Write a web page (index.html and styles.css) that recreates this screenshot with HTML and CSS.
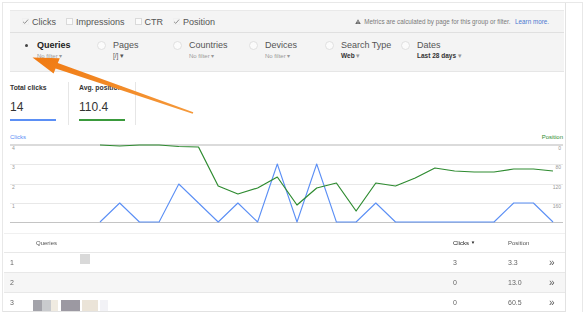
FILE: index.html
```html
<!DOCTYPE html>
<html>
<head>
<meta charset="utf-8">
<link rel="stylesheet" href="styles.css">
</head>
<body>
<div class="frame">
  <div class="main">
    <div class="toolbar">
      <div class="checks">
        <label class="chk"><span class="box on"><svg viewBox="0 0 7 7"><path d="M1 3.8 L2.8 5.4 L6 1.6" fill="none" stroke="#888" stroke-width="0.9"/></svg></span>Clicks</label>
        <label class="chk"><span class="box"></span>Impressions</label>
        <label class="chk"><span class="box"></span>CTR</label>
        <label class="chk"><span class="box on"><svg viewBox="0 0 7 7"><path d="M1 3.8 L2.8 5.4 L6 1.6" fill="none" stroke="#888" stroke-width="0.9"/></svg></span>Position</label>
        <div class="note"><svg class="warn" viewBox="0 0 8 7"><path d="M4 0.3 L7.8 6.7 L0.2 6.7 Z" fill="#666"/><rect x="3.6" y="2.3" width="0.8" height="2.4" fill="#fff"/><rect x="3.6" y="5.2" width="0.8" height="0.8" fill="#fff"/></svg>Metrics are calculated by page for this group or filter. <span class="link">Learn more.</span></div>
      </div>
      <div class="dims">
        <div class="dim"><span class="radio sel"></span><div><div class="dim-label strong">Queries</div><div class="dim-sub">No filter ▾</div></div></div>
        <div class="dim"><span class="radio"></span><div><div class="dim-label">Pages</div><div class="dim-sub dark">[/] ▾</div></div></div>
        <div class="dim"><span class="radio"></span><div><div class="dim-label">Countries</div><div class="dim-sub">No filter ▾</div></div></div>
        <div class="dim"><span class="radio"></span><div><div class="dim-label">Devices</div><div class="dim-sub">No filter ▾</div></div></div>
        <div class="dim"><span class="radio"></span><div><div class="dim-label">Search Type</div><div class="dim-sub bold">Web <span class="caret">▾</span></div></div></div>
        <div class="dim"><span class="radio"></span><div><div class="dim-label">Dates</div><div class="dim-sub bold">Last 28 days <span class="caret">▾</span></div></div></div>
      </div>
    </div>

    <div class="scorecards">
      <div class="card first">
        <div class="card-title">Total clicks</div>
        <div class="card-value">14</div>
        <div class="bar blue"></div>
      </div>
      <div class="card">
        <div class="card-title">Avg. position</div>
        <div class="card-value">110.4</div>
        <div class="bar green"></div>
      </div>
    </div>

    <div class="chart-labels">
      <span class="lbl-clicks">Clicks</span>
      <span class="lbl-pos">Position</span>
    </div>
    <svg class="chart" viewBox="10 143 554 84" width="554" height="84">
      <line x1="10" y1="145" x2="563" y2="145" stroke="#cfcfcf" stroke-width="1.6"/>
      <line x1="10" y1="164.5" x2="563" y2="164.5" stroke="#e8e8e8" stroke-width="1"/>
      <line x1="10" y1="184.5" x2="563" y2="184.5" stroke="#e8e8e8" stroke-width="1"/>
      <line x1="10" y1="203.5" x2="563" y2="203.5" stroke="#e8e8e8" stroke-width="1"/>
      <line x1="10" y1="222.5" x2="563" y2="222.5" stroke="#c4c4c4" stroke-width="1"/>
      <g class="axis">
        <text x="12" y="150">4</text>
        <text x="12" y="169">3</text>
        <text x="12" y="189">2</text>
        <text x="12" y="208">1</text>
        <text x="561" y="150" text-anchor="end">0</text>
        <text x="561" y="169" text-anchor="end">80</text>
        <text x="561" y="189" text-anchor="end">120</text>
        <text x="561" y="208" text-anchor="end">160</text>
      </g>
      <polyline fill="none" stroke="#5b8ff5" stroke-width="1.1" stroke-linejoin="round"
        points="100,222 119.7,203 139.4,222 159.1,222 178.8,184 198.5,203 218.2,222 237.9,203 257.6,222 277.3,164 297,222 316.7,164 336.4,222 356.1,222 375.8,203 395.5,222 415.2,222 434.9,222 454.6,222 474.3,222 494,222 513.7,203 533.4,203 553,222"/>
      <polyline fill="none" stroke="#2e8b30" stroke-width="1.2" stroke-linejoin="round"
        points="100,145 119.7,146 139.4,145 159.1,145 178.8,146.5 198.5,147 218.2,186 237.9,194 257.6,188 277.3,177 297,205 316.7,188 336.4,183 356.1,211 375.8,183 395.5,186 415.2,178 434.9,168 454.6,171 474.3,172 494,172 513.7,169 533.4,169 553,171"/>
    </svg>

    <div class="table">
      <div class="row head">
        <div class="c-num"></div>
        <div class="c-q">Queries</div>
        <div class="c-clicks">Clicks <span class="sort">▼</span></div>
        <div class="c-pos">Position</div>
        <div class="c-go"></div>
      </div>
      <div class="row">
        <div class="c-num">1</div>
        <div class="c-q"><span class="redact r1"></span></div>
        <div class="c-clicks">3</div>
        <div class="c-pos">3.3</div>
        <div class="c-go">»</div>
      </div>
      <div class="row alt">
        <div class="c-num">2</div>
        <div class="c-q"></div>
        <div class="c-clicks">0</div>
        <div class="c-pos">13.0</div>
        <div class="c-go">»</div>
      </div>
      <div class="row">
        <div class="c-num">3</div>
        <div class="c-q blocks"><span class="b b1"></span><span class="b b2"></span><span class="b b3"></span><span class="b b4"></span><span class="b b5"></span><span class="b b6"></span></div>
        <div class="c-clicks">0</div>
        <div class="c-pos">60.5</div>
        <div class="c-go">»</div>
      </div>
    </div>
  </div>
</div>

<svg class="annot" width="583" height="314" viewBox="0 0 583 314">
  <defs>
    <linearGradient id="og" x1="0" y1="0" x2="1" y2="1">
      <stop offset="0" stop-color="#f07a12"/>
      <stop offset="1" stop-color="#f59a3c"/>
    </linearGradient>
  </defs>
  <polygon fill="url(#og)" points="193.3,112.2 57.8,63.0 59.8,58.2 32.5,57.6 53.6,73.6 55.6,68.6 192.7,113.8"/>
</svg>
</body>
</html>
```

FILE: styles.css
```css
* { box-sizing: border-box; }
html, body { margin: 0; padding: 0; background: #fff; }
body {
  font-family: "Liberation Sans", Arial, sans-serif;
  color: #333;
  width: 583px;
  height: 314px;
  overflow: hidden;
  position: relative;
}

.frame {
  margin: 2px 0 0 2px;
  width: 581px;
  height: 310px;
  border: 1px solid #e8e8e8;
  border-bottom: none;
  display: flex;
}

.main {
  width: 563px;
  height: 309px;
  padding: 7px 1px 0 7px;
  border-right: 1px solid #e2e2e2;
  border-bottom: 1px solid #e2e2e2;
  overflow: hidden;
}

/* toolbar */
.toolbar {
  background: #f4f4f4;
  border-top: 1px solid #e9e9e9;
  border-bottom: 1px solid #e6e6e6;
}
.checks {
  display: flex;
  align-items: center;
  gap: 10px;
  height: 22px;
  padding: 0 15px 0 12px;
  border-bottom: 1px solid #e0e0e0;
  font-size: 9px;
  color: #555;
}
.chk { display: flex; align-items: center; gap: 3px; }
.box {
  width: 7px; height: 7px;
  border: 1px solid #dadada;
  background: #fbfbfb;
  display: inline-block;
}
.box.on { border-color: #f0f0f0; background: transparent; }
.box svg { display: block; width: 7px; height: 7px; margin: -1px; }
.note {
  margin-left: auto;
  font-size: 6.3px;
  color: #7a7a7a;
  display: flex;
  align-items: center;
  gap: 3px;
}
.warn { width: 6px; height: 5.5px; }
.link { color: #4a78d0; margin-left: 1.5px; }

.dims {
  display: flex;
  padding: 6px 0 10px 11px;
}
.dim { width: 76px; display: flex; gap: 7px; }
.radio {
  width: 9px; height: 9px;
  margin-top: 1.5px;
  border-radius: 50%;
  border: 1px solid #e0e0e0;
  background: #fbfbfb;
  flex: none;
  position: relative;
}
.radio.sel { border-color: transparent; background: transparent; }
.radio.sel::after {
  content: "";
  position: absolute;
  left: 2.5px; top: 2.5px;
  width: 3px; height: 3px;
  border-radius: 50%;
  background: #444;
}
.dim-label { font-size: 9px; line-height: 12px; color: #555; white-space: nowrap; }
.dim-label.strong { font-weight: bold; color: #222; }
.dim-sub { font-size: 6px; line-height: 10px; color: #999; white-space: nowrap; }
.dim-sub.dark { color: #555; font-size: 6.5px; }
.dim-sub.bold { font-weight: bold; color: #333; font-size: 6.5px; }
.caret { font-weight: normal; color: #999; }

/* scorecards */
.scorecards { display: flex; margin-top: 10px; }
.card {
  padding: 1px 10px 4px 10px;
  border-right: 1px solid #e6e6e6;
  width: 67px;
}
.card.first { padding-left: 0; padding-right: 12px; width: 59px; }
.card-title { font-size: 6.8px; line-height: 10px; font-weight: bold; color: #333; white-space: nowrap; }
.card-value { font-size: 12px; line-height: 14px; margin-top: 7px; color: #333; }
.bar { height: 2px; width: 46px; margin-top: 5px; }
.bar.blue { background: #5b8ff5; }
.bar.green { background: #3a9a3c; }

/* chart */
.chart-labels {
  display: flex;
  justify-content: space-between;
  margin-top: 8px;
  font-size: 6px;
  line-height: 8px;
  padding-right: 1px;
}
.lbl-clicks { color: #5b8ff5; }
.lbl-pos { color: #2e8b30; }
.chart { display: block; margin-top: 2px; }
.axis text { font-family: "Liberation Sans", Arial, sans-serif; font-size: 5px; fill: #999; }

/* table */
.table {
  margin: 6px -1px 0 -6px;
  border-top: 1px solid #f0f0f0;
  will-change: transform;
  background: #fff;
}
.row {
  display: grid;
  grid-template-columns: 32px 417px 55px 40px 1fr;
  height: 20px;
  align-items: center;
  border-top: 1px solid #e8e8e8;
  font-size: 7px;
  color: #666;
}
.row.head { height: 18px; border-top: none; font-size: 6px; color: #555; }
.row.head .c-clicks { color: #222; }
.sort { font-size: 4.5px; vertical-align: 1px; }
.row.alt { background: #f6f6f6; }
.c-num { padding-left: 6px; }
.c-go { font-size: 10px; color: #555; padding-left: 1px; }
.redact.r1 {
  display: block;
  width: 10px; height: 10px;
  margin-left: 44px;
  margin-top: -8px;
  background: #d9d9d9;
}
.blocks { display: flex; align-items: center; padding-top: 6px; margin-left: -3px; }
.b { height: 11px; display: block; }
.b1 { width: 9px; background: #a3a3aa; }
.b2 { width: 9px; background: #c9cbce; }
.b3 { width: 7px; background: #f0ebe1; margin-right: 3px; }
.b4 { width: 19px; background: #9c99a2; margin-right: 2px; }
.b5 { width: 16px; background: #ebe4d8; margin-right: 2px; }
.b6 { width: 8px; background: #f2f2f6; }

.annot {
  position: absolute;
  left: 0; top: 0;
  pointer-events: none;
}
```
